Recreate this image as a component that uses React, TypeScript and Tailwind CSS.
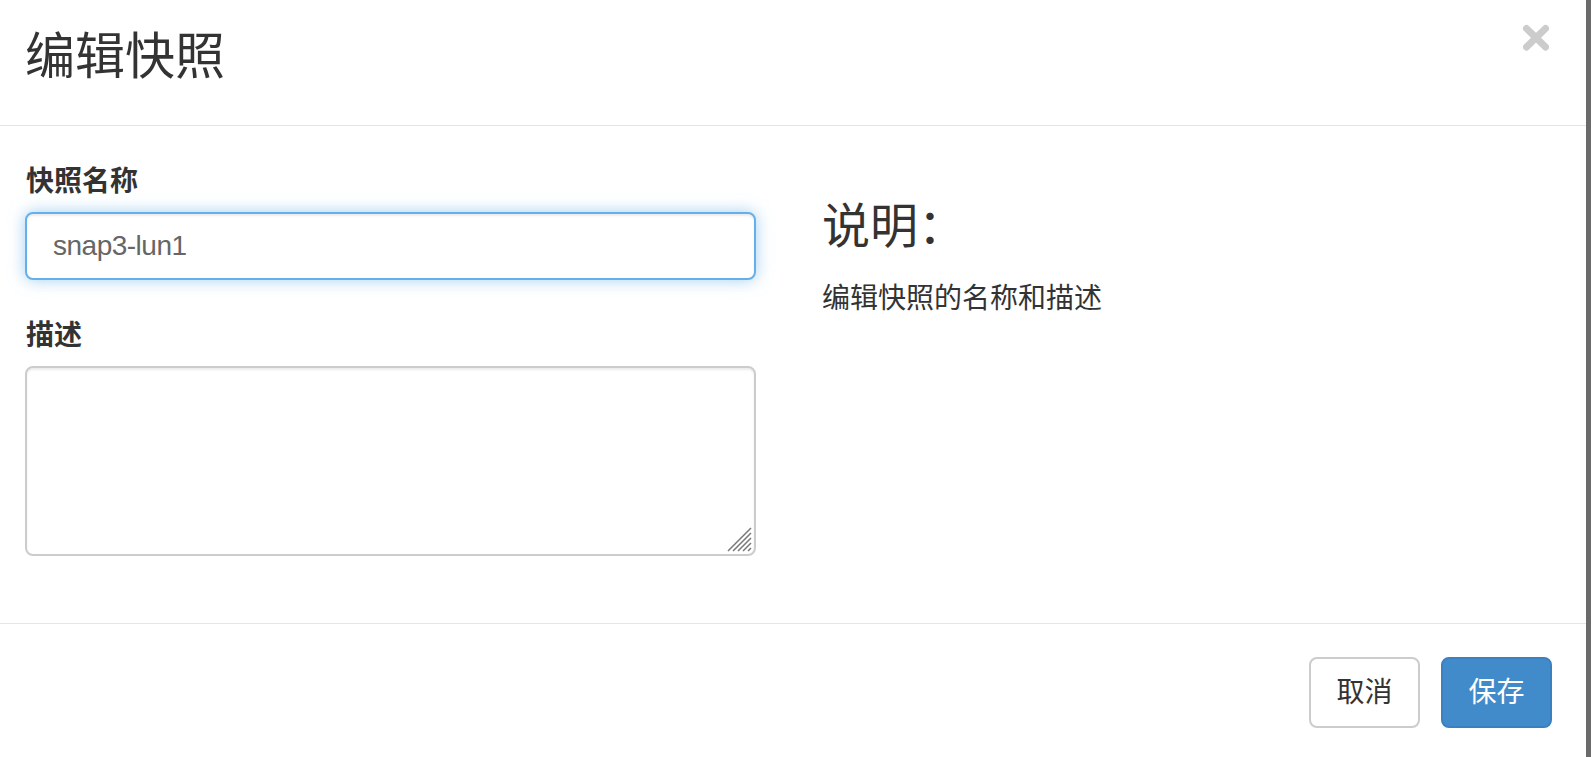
import React from "react";

const FONT = "font-['Liberation_Sans','Noto_Sans_CJK_SC',sans-serif]";

export default function App() {
  return (
    <div className={`flex h-[757px] w-[1591px] overflow-hidden bg-white text-[#333] ${FONT}`}>
      <div className="flex min-w-0 flex-1 flex-col">
        {/* Header */}
        <div className="flex h-[126px] shrink-0 items-start justify-between border-b border-[#e5e5e5] pl-[25px] pr-[36px] pt-[23px]">
          <h1 className="mt-[9px] text-[50px] font-normal leading-[50px] text-[#333]">编辑快照</h1>
          <button className="mt-[1px] h-[28px] w-[28px] p-0" aria-label="close">
            <svg width="28" height="28" viewBox="0 0 28 28">
              <path d="M4.5 4.5 L23.5 23" stroke="#cccccc" strokeWidth="7" strokeLinecap="round" />
              <path d="M23.5 4.5 L4.5 23" stroke="#cccccc" strokeWidth="7" strokeLinecap="round" />
            </svg>
          </button>
        </div>

        {/* Body */}
        <div className="flex flex-1 pl-[25px] pt-[36px]">
          <div className="flex w-[731px] shrink-0 flex-col">
            <label className="mb-[10px] pl-[1px] text-[28px] font-bold leading-[40px]">快照名称</label>
            <div className="flex h-[68px] items-center rounded-[8px] border-2 border-[#66afe9] bg-white px-[26px] shadow-[inset_0_2px_2px_rgba(0,0,0,0.075),0_0_16px_rgba(102,175,233,0.6)]">
              <span className="text-[28px] leading-[40px] tracking-[-0.5px] text-[#666]">snap3-lun1</span>
            </div>
            <label className="mb-[10px] mt-[36px] pl-[1px] text-[28px] font-bold leading-[40px]">描述</label>
            <div className="relative h-[190px] rounded-[8px] border-2 border-[#ccc] bg-white shadow-[inset_0_2px_2px_rgba(0,0,0,0.075)]">
              <svg className="absolute bottom-[2px] right-[2px]" width="26" height="26" viewBox="0 0 26 26">
                <path d="M25 2 L2 25 M25 7 L7 25 M25 12 L12 25 M25 17 L17 25 M25 22 L22 25" stroke="#777" strokeWidth="1.5" />
              </svg>
            </div>
          </div>
          <div className="ml-[66px] flex flex-col pt-[41px]">
            <h3 className="text-[48px] font-normal leading-[48px] text-[#333]">说明：</h3>
            <p className="mt-[28px] text-[28px] leading-[40px] text-[#333]">编辑快照的名称和描述</p>
          </div>
        </div>

        {/* Footer */}
        <div className="flex h-[134px] shrink-0 items-start justify-end gap-[21px] border-t border-[#e5e5e5] pr-[34px] pt-[33px]">
          <button className="flex h-[71px] w-[111px] items-center justify-center rounded-[8px] border-2 border-[#ccc] bg-white text-[28px] text-[#333]">
            取消
          </button>
          <button className="flex h-[71px] w-[111px] items-center justify-center rounded-[8px] border-2 border-[#3b80c0] bg-[#428bca] text-[28px] text-white">
            保存
          </button>
        </div>
      </div>
      <div className="w-[5px] shrink-0 bg-[#6a6a6a]" />
    </div>
  );
}
